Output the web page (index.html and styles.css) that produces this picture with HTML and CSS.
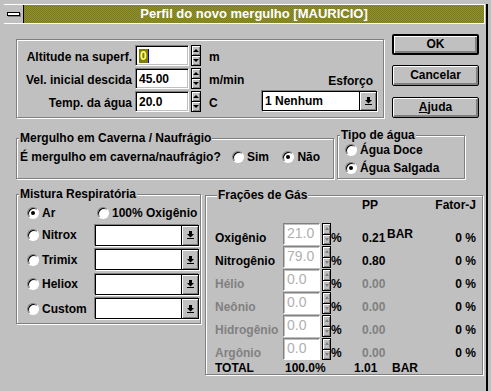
FILE: index.html
```html
<!DOCTYPE html>
<html lang="pt">
<head>
    <meta charset="UTF-8">
    <title>Perfil do novo mergulho</title>
    <link rel="stylesheet" href="styles.css">
</head>
<body>

<div class="window">
    <div class="titlebar">
        <div class="sysmenu"><span class="sysbar"></span></div>
        <div class="caption">Perfil do novo mergulho [MAURICIO]</div>
    </div>

    <div class="client">
        <!-- altitude / velocidade / temperatura + botões -->
        <div class="row row-top">
            <div class="group g-alt">
                <div class="alt-grid">
                    <span class="lbl">Altitude na superf.</span>
                    <span class="edit"><span class="sel">0</span></span>
                    <span class="spin"><i class="up"></i><i class="down"></i></span>
                    <span class="unit">m</span>

                    <span class="lbl">Vel. inicial descida</span>
                    <span class="edit">45.00</span>
                    <span class="spin"><i class="up"></i><i class="down"></i></span>
                    <span class="unit">m/min</span>

                    <span class="lbl">Temp. da água</span>
                    <span class="edit">20.0</span>
                    <span class="spin"><i class="up"></i><i class="down"></i></span>
                    <span class="unit">C</span>
                </div>
                <div class="esforco">
                    <span class="esf-lbl">Esforço</span>
                    <div class="combo">
                        <span class="combo-text">1 Nenhum</span>
                        <span class="drop"><svg width="7" height="8" viewBox="0 0 7 8"><path d="M2 0h3v3h2L3.5 6.5 0 3h2z M0 7h7v1H0z"/></svg></span>
                    </div>
                </div>
            </div>
            <div class="buttons">
                <div class="btn default">OK</div>
                <div class="btn btn-cancel">Cancelar</div>
                <div class="btn btn-help"><u>A</u>juda</div>
            </div>
        </div>

        <!-- caverna + tipo de água -->
        <div class="row row-mid">
            <fieldset class="group g-cave">
                <legend>Mergulho em Caverna / Naufrágio</legend>
                <div class="cave-row">
                    <span class="question">É mergulho em caverna/naufrágio?</span>
                    <span class="opt"><span class="radio"></span>Sim</span>
                    <span class="opt"><span class="radio on"></span>Não</span>
                </div>
            </fieldset>
            <fieldset class="group g-tipo">
                <legend>Tipo de água</legend>
                <div class="tipo-row"><span class="radio"></span>Água Doce</div>
                <div class="tipo-row"><span class="radio on"></span>Água Salgada</div>
            </fieldset>
        </div>

        <!-- mistura + frações -->
        <div class="row row-bot">
            <fieldset class="group g-mix">
                <legend>Mistura Respiratória</legend>
                <div class="mix-row first">
                    <span class="opt opt-mix"><span class="radio on"></span>Ar</span>
                    <span class="opt"><span class="radio"></span>100% Oxigênio</span>
                </div>
                <div class="mix-row">
                    <span class="opt opt-mix"><span class="radio"></span>Nitrox</span>
                    <div class="combo combo-mix"><span class="combo-text"></span><span class="drop"><svg width="7" height="8" viewBox="0 0 7 8"><path d="M2 0h3v3h2L3.5 6.5 0 3h2z M0 7h7v1H0z"/></svg></span></div>
                </div>
                <div class="mix-row">
                    <span class="opt opt-mix"><span class="radio"></span>Trimix</span>
                    <div class="combo combo-mix"><span class="combo-text"></span><span class="drop"><svg width="7" height="8" viewBox="0 0 7 8"><path d="M2 0h3v3h2L3.5 6.5 0 3h2z M0 7h7v1H0z"/></svg></span></div>
                </div>
                <div class="mix-row">
                    <span class="opt opt-mix"><span class="radio"></span>Heliox</span>
                    <div class="combo combo-mix"><span class="combo-text"></span><span class="drop"><svg width="7" height="8" viewBox="0 0 7 8"><path d="M2 0h3v3h2L3.5 6.5 0 3h2z M0 7h7v1H0z"/></svg></span></div>
                </div>
                <div class="mix-row">
                    <span class="opt opt-mix"><span class="radio"></span>Custom</span>
                    <div class="combo combo-mix"><span class="combo-text"></span><span class="drop"><svg width="7" height="8" viewBox="0 0 7 8"><path d="M2 0h3v3h2L3.5 6.5 0 3h2z M0 7h7v1H0z"/></svg></span></div>
                </div>
            </fieldset>

            <fieldset class="group g-gas">
                <legend>Frações de Gás</legend>
                <div class="frow fhead">
                    <span></span><span></span><span></span><span></span>
                    <span>PP</span><span></span><span class="fj">Fator-J</span>
                </div>
                <div class="frow first">
                    <span class="flbl">Oxigênio</span>
                    <span class="fedit">21.0</span>
                    <span class="fspin"><i class="up"></i><i class="down"></i></span>
                    <span>%</span><span>0.21</span><span class="bar">BAR</span><span class="fj">0 %</span>
                </div>
                <div class="frow">
                    <span class="flbl">Nitrogênio</span>
                    <span class="fedit">79.0</span>
                    <span class="fspin"><i class="up"></i><i class="down"></i></span>
                    <span>%</span><span>0.80</span><span></span><span class="fj">0 %</span>
                </div>
                <div class="frow off">
                    <span class="flbl">Hélio</span>
                    <span class="fedit">0.0</span>
                    <span class="fspin"><i class="up"></i><i class="down"></i></span>
                    <span class="pct">%</span><span>0.00</span><span></span><span class="fj">0 %</span>
                </div>
                <div class="frow off">
                    <span class="flbl">Neônio</span>
                    <span class="fedit">0.0</span>
                    <span class="fspin"><i class="up"></i><i class="down"></i></span>
                    <span class="pct">%</span><span>0.00</span><span></span><span class="fj">0 %</span>
                </div>
                <div class="frow off">
                    <span class="flbl">Hidrogênio</span>
                    <span class="fedit">0.0</span>
                    <span class="fspin"><i class="up"></i><i class="down"></i></span>
                    <span class="pct">%</span><span>0.00</span><span></span><span class="fj">0 %</span>
                </div>
                <div class="frow off">
                    <span class="flbl">Argônio</span>
                    <span class="fedit">0.0</span>
                    <span class="fspin"><i class="up"></i><i class="down"></i></span>
                    <span class="pct">%</span><span>0.00</span><span></span><span class="fj">0 %</span>
                </div>
                <div class="total">
                    <span>TOTAL</span><span>100.0%</span><span>1.01</span><span>BAR</span>
                </div>
            </fieldset>
        </div>
    </div>
</div>

</body>
</html>
```

FILE: styles.css
```css
* {
    box-sizing: border-box;
}
body {
    margin: 0;
    background: #c0c0c0;
    font: bold 12px "Liberation Sans", Arial, sans-serif;
    color: #000;
}

/* janela */
.window {
    width: 488px;
    height: 389px;
    border-right: 2px solid #000;
    border-bottom: 2px solid #000;
}
.titlebar {
    display: flex;
    width: 481px;
    height: 20px;
    margin: 4px 0 0 4px;
    border: 1px solid #fff;
    border-left: 0;
}
.sysmenu {
    width: 20px;
    border-right: 1px solid #000;
    display: flex;
    align-items: center;
    justify-content: center;
}
.sysbar {
    width: 13px;
    height: 4px;
    background: #fff;
    border: 1px solid #000;
    box-shadow: 1px 1px 0 #808080;
}
.caption {
    flex: 1;
    text-align: center;
    color: #fff;
    font-size: 13px;
    line-height: 18px;
    background: repeating-conic-gradient(#808000 0 25%, #8c8c4c 0 50%) 0 0 / 2px 2px;
}

.client {
    padding-left: 16px;
}
.row {
    display: flex;
    align-items: flex-start;
}
.row-top { margin-top: 10px; }
.row-mid { margin-top: 10px; }
.row-bot { margin-top: 8px; }

/* caixas de grupo */
fieldset {
    margin: 0;
    padding: 0;
    min-width: 0;
}
.group {
    border: 1px solid #808080;
    box-shadow: inset 1px 1px 0 #fff, 1px 1px 0 #fff;
}
.group legend {
    margin-left: 2px;
    padding: 0 1px;
    line-height: 14px;
    background: #c0c0c0;
}

/* altitude */
.g-alt {
    display: flex;
    width: 368px;
    height: 79px;
    margin-top: 5px;
    padding-top: 5px;
}
.alt-grid {
    display: grid;
    grid-template-columns: 118px 54px 20px 40px;
    grid-auto-rows: 21px;
    row-gap: 2px;
    align-items: center;
}
.lbl {
    text-align: right;
    padding-right: 3px;
    padding-top: 2px;
}
.unit {
    padding-top: 2px;
}
.edit {
    height: 21px;
    background: #fff;
    border: 1px solid;
    border-color: #808080 #fff #fff #808080;
    box-shadow: inset 1px 1px 0 #000, inset -1px -1px 0 #c0c0c0;
    padding: 2px 0 0 3px;
    line-height: 16px;
}
.sel {
    background: #808000;
    color: #ffff80;
    padding: 0 1px;
    border-right: 1px solid #0000ff;
}
.spin {
    width: 10px;
    height: 21px;
    margin-left: 2px;
    display: flex;
    flex-direction: column;
}
.spin i, .fspin i {
    flex: 1;
    border: 1px solid #000;
    background: #c0c0c0;
    box-shadow: inset 1px 1px 0 #fff, inset -1px -1px 0 #808080;
    display: flex;
    align-items: center;
    justify-content: center;
}
.spin .down, .fspin .down {
    border-top: 0;
}
.spin i::after, .fspin i::after {
    content: "";
    border-left: 3px solid transparent;
    border-right: 3px solid transparent;
}
.spin .up::after { border-bottom: 3px solid #000; }
.spin .down::after { border-top: 3px solid #000; }

.esforco {
    display: flex;
    flex-direction: column;
    align-items: flex-end;
    justify-content: flex-end;
    width: 115px;
    margin-left: 13px;
    padding-bottom: 6px;
    align-self: stretch;
}
.esf-lbl {
    line-height: 14px;
    margin: 0 4px 3px 0;
}
.combo {
    display: flex;
    width: 100%;
    height: 20px;
    background: #fff;
    border: 1px solid #000;
    box-shadow: -1px -1px 0 #808080, 1px 1px 0 #fff;
}
.combo-text {
    flex: 1;
    padding-left: 2px;
    line-height: 18px;
}
.drop {
    width: 17px;
    border-left: 1px solid #000;
    background: #c0c0c0;
    box-shadow: inset 1px 1px 0 #fff, inset -1px -1px 0 #808080;
    display: flex;
    align-items: center;
    justify-content: center;
}

/* botões */
.buttons {
    display: flex;
    flex-direction: column;
    width: 87px;
    margin-left: 8px;
}
.btn {
    height: 21px;
    border: 1px solid #000;
    border-radius: 2px;
    background: #c0c0c0;
    box-shadow: inset 1px 1px 0 #fff, inset -1px -1px 0 #808080, inset -2px -2px 0 #808080;
    text-align: center;
    line-height: 18px;
}
.btn.default {
    border-width: 2px;
    line-height: 16px;
}
.btn-cancel { margin-top: 10px; }
.btn-help { margin-top: 11px; }

/* rádios */
.radio {
    position: relative;
    flex: none;
    width: 12px;
    height: 12px;
    border-radius: 50%;
    background: #fff;
    border: 1px solid;
    border-color: #808080 #fff #fff #808080;
    box-shadow: inset 1px 1px 0 #000;
}
.radio.on::after {
    content: "";
    position: absolute;
    left: 3px;
    top: 3px;
    width: 4px;
    height: 4px;
    border-radius: 50%;
    background: #000;
}
.opt {
    display: flex;
    align-items: center;
    gap: 3px;
}

/* caverna */
.g-cave {
    width: 318px;
    height: 48px;
    margin-top: 3px;
}
.cave-row {
    display: flex;
    align-items: center;
    height: 16px;
    margin-top: 4px;
    padding-left: 3px;
}
.question { width: 218px; }
.cave-row .opt { width: 52px; }

/* tipo de água */
.g-tipo {
    width: 128px;
    height: 51px;
    margin-left: 3px;
}
.tipo-row {
    display: flex;
    align-items: center;
    gap: 3px;
    height: 16px;
    margin-bottom: 2px;
    padding-left: 7px;
}

/* mistura */
.g-mix {
    width: 185px;
    height: 137px;
}
.mix-row {
    display: flex;
    align-items: center;
    height: 21px;
    margin-top: 3.5px;
    padding-left: 10px;
}
.mix-row.first {
    height: 16px;
    margin: 4px 0 2.5px;
}
.opt-mix { width: 68px; }
.mix-row.first .opt-mix { width: 70px; }
.combo-mix {
    width: 104px;
    height: 21px;
}

/* frações */
.g-gas {
    width: 278px;
    height: 187px;
    margin: 1px 0 0 4px;
    padding: 0 6px 0 9px;
}
.frow {
    display: grid;
    grid-template-columns: 68px 37px 11px 31px 25px 1fr auto;
    height: 22px;
    margin-top: 1px;
    align-items: end;
    line-height: 14px;
}
.frow.fhead {
    height: 14px;
    margin-top: -4px;
}
.frow.first { margin-top: 11px; }
.off .flbl, .off span:nth-child(5) {
    color: #808080;
}
.fedit {
    align-self: stretch;
    background: #fff;
    border: 1px solid;
    border-color: #808080 #fff #fff #808080;
    box-shadow: inset 1px 1px 0 #c0c0c0;
    font: 14px "Liberation Sans", Arial, sans-serif;
    color: #b0b0b0;
    line-height: 16px;
    padding: 1px 0 0 3px;
}
.fspin {
    align-self: stretch;
    width: 9px;
    margin-left: 2px;
    display: flex;
    flex-direction: column;
}
.fspin i::after {
    border-left-width: 2px;
    border-right-width: 2px;
}
.fspin .up::after { border-bottom: 3px solid #808080; }
.fspin .down::after { border-top: 3px solid #808080; }
.bar { align-self: center; }
.fj { text-align: right; }
.total {
    display: grid;
    grid-template-columns: 70px 69px 38px auto;
    line-height: 14px;
    margin-top: 1px;
}
```
